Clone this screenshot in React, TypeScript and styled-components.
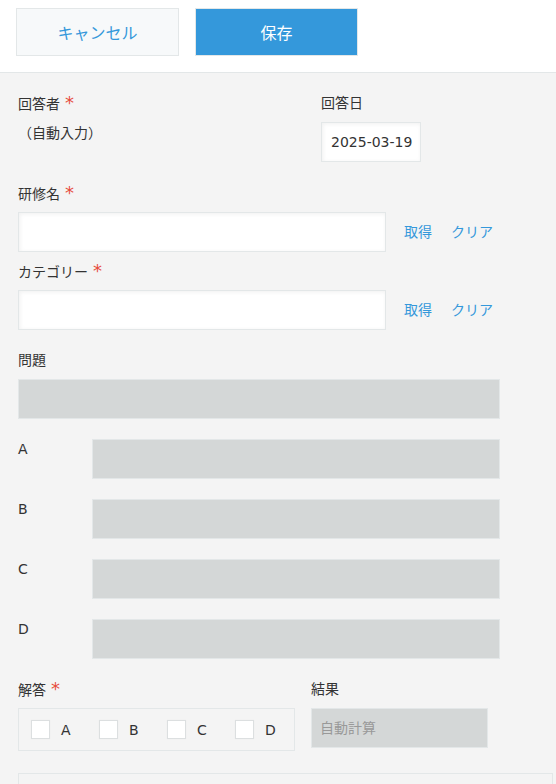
import styled, { createGlobalStyle } from 'styled-components';

const GlobalStyle = createGlobalStyle`
  *, *::before, *::after {
    box-sizing: border-box;
  }
  body {
    margin: 0;
    background: #f4f4f4;
    color: #333333;
    font-family: "DejaVu Sans", "Noto Sans CJK JP", sans-serif;
    font-size: 14px;
  }
`;

const Toolbar = styled.div`
  display: flex;
  gap: 16px;
  height: 73px;
  padding: 8px 16px 0;
  background: #ffffff;
  border-bottom: 1px solid #e3e7e8;
`;

const ToolButton = styled.button<{ $primary?: boolean }>`
  width: 163px;
  height: 48px;
  border: 1px solid #e3e7e8;
  background: ${({ $primary }) => ($primary ? '#3498db' : '#f7f9fa')};
  color: ${({ $primary }) => ($primary ? '#ffffff' : '#3498db')};
  font-family: "Noto Sans CJK JP", sans-serif;
  font-size: 16px;
  cursor: pointer;
`;

const Form = styled.div`
  padding: 20px 0 0 18px;
`;

const Row = styled.div<{ $gap?: number }>`
  display: flex;
  align-items: flex-start;
  margin-top: ${({ $gap }) => $gap ?? 0}px;
`;

const Field = styled.div<{ $width?: number }>`
  display: flex;
  flex-direction: column;
  width: ${({ $width }) => ($width ? `${$width}px` : 'auto')};
`;

const Label = styled.div`
  height: 20px;
  line-height: 20px;
  margin-bottom: 9px;
  white-space: nowrap;
`;

const Required = styled.span`
  margin-left: 5px;
  color: #e74c3c;
  font-size: 18px;
`;

const ValueText = styled.div`
  padding-top: 1px;
  line-height: 20px;
`;

const DateBox = styled.div`
  width: 100px;
  height: 40px;
  padding: 0 9px;
  line-height: 38px;
  background: #ffffff;
  border: 1px solid #e3e7e8;
  box-shadow: inset 1px 1px 4px #f0f0f0;
  white-space: nowrap;
`;

const Control = styled.div`
  display: flex;
  align-items: center;
`;

const TextInput = styled.input`
  width: 368px;
  height: 40px;
  padding: 0 8px;
  background: #ffffff;
  border: 1px solid #e3e7e8;
  box-shadow: inset 1px 1px 4px #f0f0f0;
  font: inherit;
  outline: none;
`;

const ActionLink = styled.a`
  margin-left: 18px;
  color: #3498db;
  line-height: 20px;
  cursor: pointer;
  & + & {
    margin-left: 19px;
  }
`;

const ReadonlyBox = styled.div<{ $width: number }>`
  width: ${({ $width }) => $width}px;
  height: 40px;
  padding: 0 8px;
  line-height: 38px;
  background: #d4d7d7;
  border: 1px solid #e3e7e8;
  color: #999999;
`;

const OptionLabel = styled.div`
  width: 74px;
  line-height: 20px;
`;

const CheckGroup = styled.div`
  display: flex;
  align-items: center;
  width: 277px;
  height: 43px;
  padding-left: 12px;
  border: 1px solid #e3e7e8;
  overflow: hidden;
`;

const CheckItem = styled.label`
  display: flex;
  flex: none;
  align-items: center;
  gap: 11px;
  width: 68px;
  cursor: pointer;
`;

const CheckBox = styled.span`
  width: 19px;
  height: 19px;
  background: #ffffff;
  border: 1px solid #dcdfe0;
  box-shadow: 0 0 1px #e6e6e6;
`;

const BottomBox = styled.div`
  width: 535px;
  height: 60px;
  margin-top: 22px;
  border: 1px solid #e3e7e8;
`;

const options = ['A', 'B', 'C', 'D'];

export default function App() {
  return (
    <>
      <GlobalStyle />
      <Toolbar>
        <ToolButton>キャンセル</ToolButton>
        <ToolButton $primary>保存</ToolButton>
      </Toolbar>
      <Form>
        <Row>
          <Field $width={303}>
            <Label>回答者<Required>*</Required></Label>
            <ValueText>（自動入力）</ValueText>
          </Field>
          <Field>
            <Label>回答日</Label>
            <DateBox>2025-03-19</DateBox>
          </Field>
        </Row>

        <Row $gap={21}>
          <Field>
            <Label>研修名<Required>*</Required></Label>
            <Control>
              <TextInput />
              <ActionLink>取得</ActionLink>
              <ActionLink>クリア</ActionLink>
            </Control>
          </Field>
        </Row>

        <Row $gap={9}>
          <Field>
            <Label>カテゴリー<Required>*</Required></Label>
            <Control>
              <TextInput />
              <ActionLink>取得</ActionLink>
              <ActionLink>クリア</ActionLink>
            </Control>
          </Field>
        </Row>

        <Row $gap={20}>
          <Field>
            <Label>問題</Label>
            <ReadonlyBox $width={482} />
          </Field>
        </Row>

        {options.map((opt) => (
          <Row key={opt} $gap={20}>
            <OptionLabel>{opt}</OptionLabel>
            <ReadonlyBox $width={408} />
          </Row>
        ))}

        <Row $gap={20}>
          <Field $width={293}>
            <Label>解答<Required>*</Required></Label>
            <CheckGroup>
              {options.map((opt) => (
                <CheckItem key={opt}>
                  <CheckBox />
                  {opt}
                </CheckItem>
              ))}
            </CheckGroup>
          </Field>
          <Field>
            <Label>結果</Label>
            <ReadonlyBox $width={177}>自動計算</ReadonlyBox>
          </Field>
        </Row>

        <BottomBox />
      </Form>
    </>
  );
}
